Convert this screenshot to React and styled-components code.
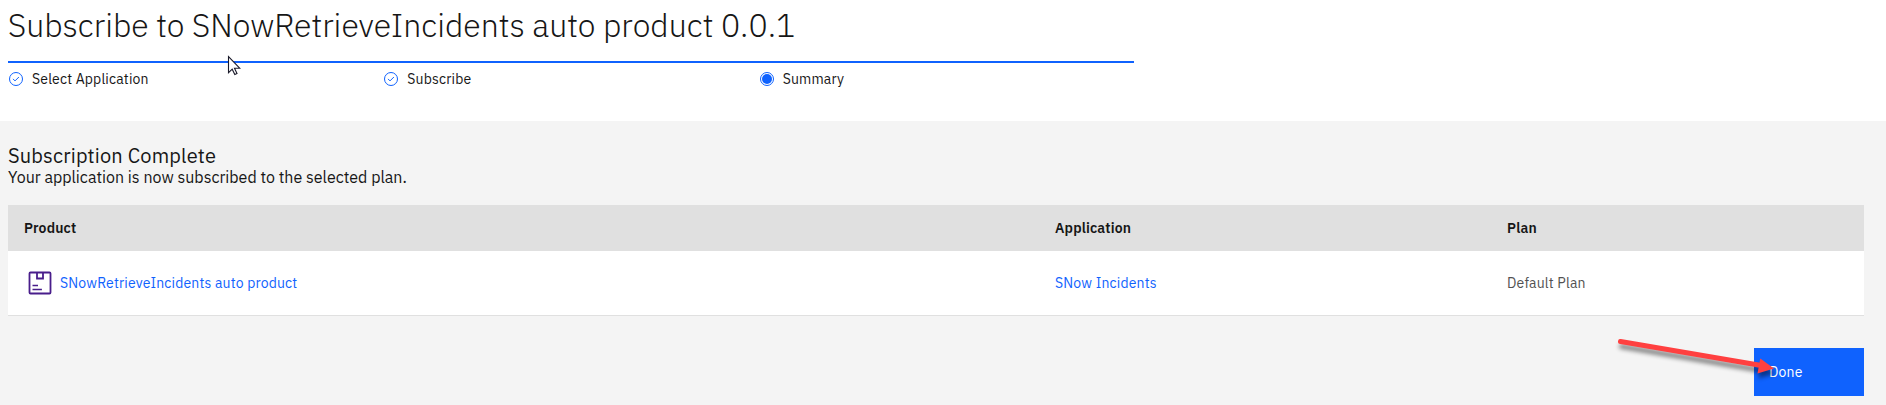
import React from "react";
import styled, { createGlobalStyle } from "styled-components";

const blue = "#0f62fe";

const GlobalStyle = createGlobalStyle`
  *, *::before, *::after { box-sizing: border-box; }
  body {
    margin: 0;
    background: #f4f4f4;
    color: #161616;
    font-family: "IBM Plex Sans", Roboto, "Liberation Sans", sans-serif;
    font-size: 14px;
    line-height: 18px;
  }
  h1, h2, p { margin: 0; }
`;

const Page = styled.div`
  position: relative;
  height: 405px;
  overflow: hidden;
  display: flex;
  flex-direction: column;
`;

const Header = styled.header`
  height: 121px;
  padding: 5px 8px 0;
  background: #fff;
`;

const Title = styled.h1`
  height: 56px;
  font-size: 32px;
  font-weight: 300;
  line-height: 40px;
  white-space: nowrap;
`;

const Steps = styled.ol`
  display: grid;
  grid-template-columns: repeat(3, 1fr);
  width: 1126px;
  margin: 0;
  padding: 0;
  list-style: none;
  border-top: 2px solid ${blue};
`;

const Step = styled.li`
  display: flex;
  align-items: center;
  gap: 8px;
  height: 32px;
  letter-spacing: 0.16px;

  svg { flex: none; }
`;

const Content = styled.main`
  flex: 1;
  padding: 24px 22px 0 8px;
`;

const Heading = styled.h2`
  font-size: 20px;
  font-weight: 400;
  line-height: 22px;
  letter-spacing: 0.17px;
`;

const Message = styled.p`
  font-size: 16px;
  line-height: 20px;
`;

const Table = styled.div`
  margin-top: 18px;
`;

const Row = styled.div`
  display: grid;
  grid-template-columns: 1031px 452px 1fr;
  align-items: center;
  height: ${(p) => (p.$head ? "46px" : "65px")};
  padding: 0 16px;
  background: ${(p) => (p.$head ? "#e0e0e0" : "#fff")};
  border-bottom: ${(p) => (p.$head ? "none" : "1px solid #e0e0e0")};
  font-weight: ${(p) => (p.$head ? 600 : 400)};
  letter-spacing: 0.16px;
  color: ${(p) => (p.$head ? "#161616" : "#525252")};
`;

const ProductCell = styled.div`
  display: flex;
  align-items: center;
  gap: 8px;
  padding-left: 4px;
`;

const Link = styled.a`
  color: ${blue};
  text-decoration: none;
`;

const Actions = styled.div`
  display: flex;
  justify-content: flex-end;
  margin-top: 32px;
`;

const Button = styled.button`
  width: 110px;
  height: 48px;
  padding: 0 0 0 15px;
  border: 0;
  background: ${blue};
  color: #fff;
  font: inherit;
  letter-spacing: 0.16px;
  text-align: left;
`;

const Cursor = styled.svg`
  position: absolute;
  left: 227px;
  top: 55px;
`;

const Arrow = styled.svg`
  position: absolute;
  left: 1605px;
  top: 325px;
  overflow: visible;
  filter: drop-shadow(1px 5px 2px rgba(0, 0, 0, 0.45));
`;

function DoneIcon() {
  return (
    <svg width="16" height="16" viewBox="0 0 16 16" fill="none" stroke={blue}>
      <circle cx="8" cy="8" r="6.5" />
      <path d="M5 7.9 7 9.9 10.9 6" />
    </svg>
  );
}

function CurrentIcon() {
  return (
    <svg width="16" height="16" viewBox="0 0 16 16">
      <circle cx="8" cy="8" r="6.5" fill="none" stroke={blue} />
      <circle cx="8" cy="8" r="5" fill={blue} />
    </svg>
  );
}

function ProductIcon() {
  return (
    <svg width="24" height="24" viewBox="0 0 24 24" fill="none" stroke="#491d8b" strokeWidth="1.8">
      <rect x="1.5" y="1.5" width="21" height="21" rx="1" />
      <path d="M9 1.5v6h6v-6" />
      <path d="M4.5 14.6h5.5M4.5 18.5h9.4" strokeWidth="1.5" />
    </svg>
  );
}

export default function App() {
  return (
    <Page>
      <GlobalStyle />
      <Header>
        <Title>Subscribe to SNowRetrieveIncidents auto product 0.0.1</Title>
        <Steps>
          <Step><DoneIcon />Select Application</Step>
          <Step><DoneIcon />Subscribe</Step>
          <Step><CurrentIcon />Summary</Step>
        </Steps>
      </Header>
      <Content>
        <Heading>Subscription Complete</Heading>
        <Message>Your application is now subscribed to the selected plan.</Message>
        <Table>
          <Row $head>
            <span>Product</span>
            <span>Application</span>
            <span>Plan</span>
          </Row>
          <Row>
            <ProductCell>
              <ProductIcon />
              <Link>SNowRetrieveIncidents auto product</Link>
            </ProductCell>
            <Link>SNow Incidents</Link>
            <span>Default Plan</span>
          </Row>
        </Table>
        <Actions>
          <Button type="button">Done</Button>
        </Actions>
      </Content>
      <Cursor width="14" height="21" viewBox="0 0 14 21">
        <path
          d="M1.5 1.5v16.2l3.7-3.5 2.6 5.3 2.2-1-2.5-5.2h5.4z"
          fill="#fff"
          stroke="#1a1a2a"
          strokeWidth="1.1"
        />
      </Cursor>
      <Arrow width="180" height="50" viewBox="0 0 180 50">
        <path d="M15.5 16.5 155 40.2" stroke="#ff4040" strokeWidth="5" strokeLinecap="round" />
        <path d="M155.3 33.5 169 43.5 152.5 48.5z" fill="#ff4040" />
      </Arrow>
    </Page>
  );
}
